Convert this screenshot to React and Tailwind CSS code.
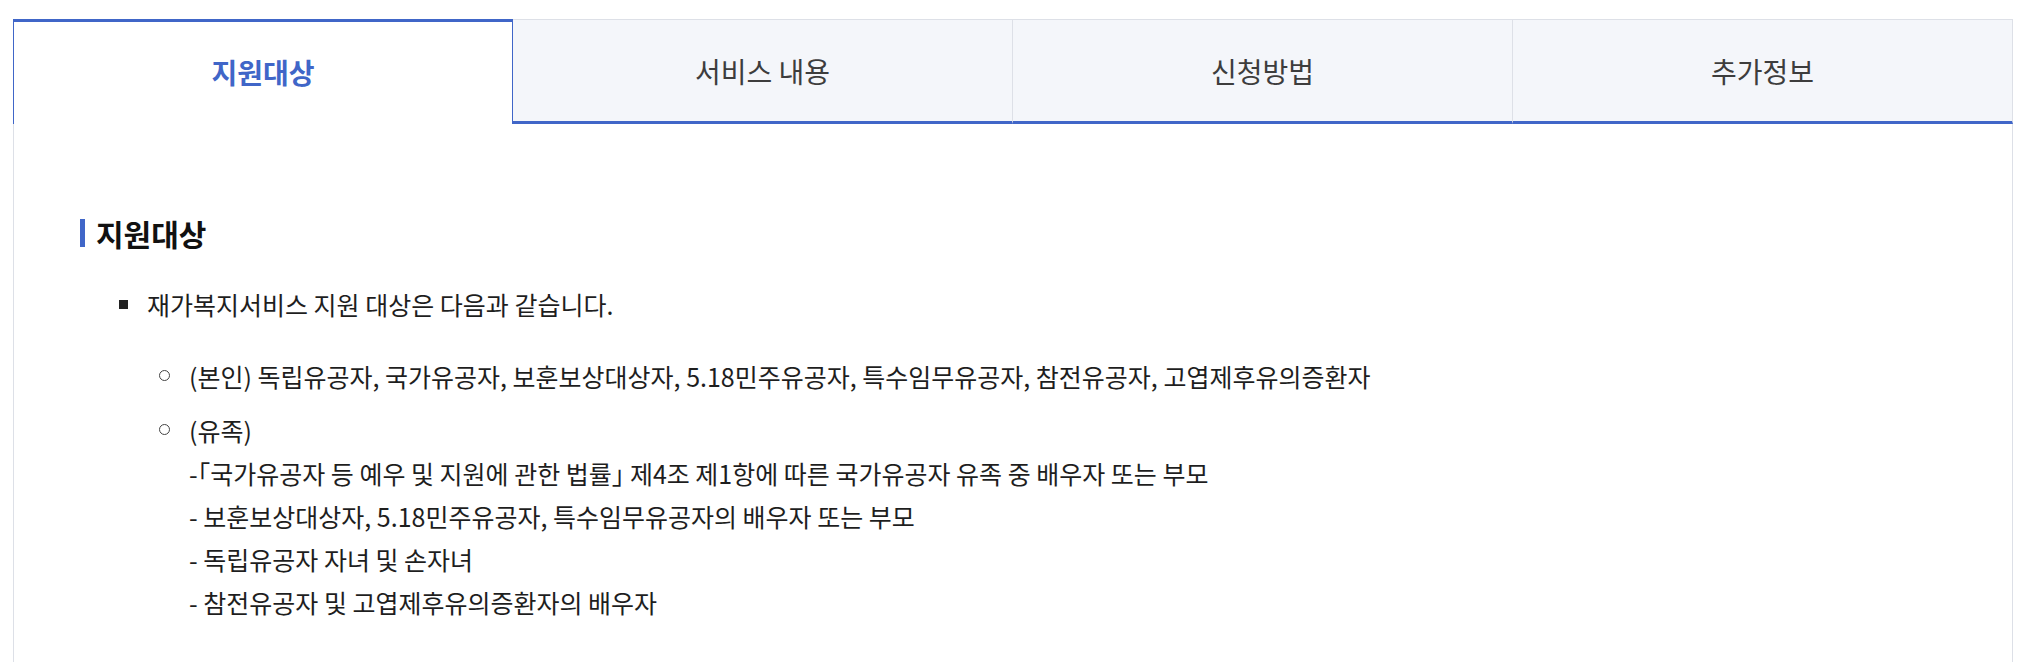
import React from "react";

const tabs = ["지원대상", "서비스 내용", "신청방법", "추가정보"];

const self =
    "(본인) 독립유공자, 국가유공자, 보훈보상대상자, 5.18민주유공자, 특수임무유공자, 참전유공자, 고엽제후유의증환자";

const family = [
    "-「국가유공자 등 예우 및 지원에 관한 법률」 제4조 제1항에 따른 국가유공자 유족 중 배우자 또는 부모",
    "- 보훈보상대상자, 5.18민주유공자, 특수임무유공자의 배우자 또는 부모",
    "- 독립유공자 자녀 및 손자녀",
    "- 참전유공자 및 고엽제후유의증환자의 배우자",
];

function Circle() {
    return <span className="w-[11px] h-[11px] rounded-full border-[1.5px] border-[#444] shrink-0 mt-[15px]"></span>;
}

export default function App() {
    return (
        <div className="bg-white min-h-[662px] pt-[19px] pl-[13px] font-['Noto_Sans_CJK_KR',sans-serif]">
            <div className="w-[2000px]">

                {/* Tabs */}
                <div className="flex h-[105px]">
                    {tabs.map((tab, index) =>
                        index === 0 ? (
                            <div
                                key={index}
                                className="w-[500px] flex items-center justify-center border-t-[3px] border-x border-[#4066c8] bg-white text-[#4066c8] text-[28px] font-bold pb-[2px]"
                            >
                                {tab}
                            </div>
                        ) : (
                            <div
                                key={index}
                                className="w-[500px] flex items-center justify-center bg-[#f4f6fa] border-t border-r border-[#dde0e7] border-b-[3px] border-b-[#4066c8] text-[#3d3d3d] text-[28px]"
                            >
                                {tab}
                            </div>
                        )
                    )}
                </div>

                {/* Panel */}
                <div className="border-x border-[#dde0e7] pt-[91px] pl-[66px] pb-[40px] text-[#1e1e1e]">
                    <h2 className="flex items-center gap-[11px] text-[30px] font-bold leading-[36px] text-[#111]">
                        <span className="w-[5px] h-[28px] bg-[#4066c8]"></span>
                        지원대상
                    </h2>

                    <div className="mt-[32px] flex gap-[19px] pl-[39px] text-[25px]">
                        <span className="w-[9px] h-[9px] bg-[#222] shrink-0 mt-[17px]"></span>
                        <div className="leading-[43px] [font-feature-settings:'halt']">
                            <p>재가복지서비스 지원 대상은 다음과 같습니다.</p>

                            <ul className="mt-[29px] -ml-[1px]">
                                <li className="flex gap-[19px] ml-[13px] mb-[11px]">
                                    <Circle />
                                    <span>{self}</span>
                                </li>
                                <li className="flex gap-[19px] ml-[13px]">
                                    <Circle />
                                    <div>
                                        <p>(유족)</p>
                                        {family.map((line, index) => (
                                            <p key={index}>{line}</p>
                                        ))}
                                    </div>
                                </li>
                            </ul>
                        </div>
                    </div>
                </div>

            </div>
        </div>
    );
}
